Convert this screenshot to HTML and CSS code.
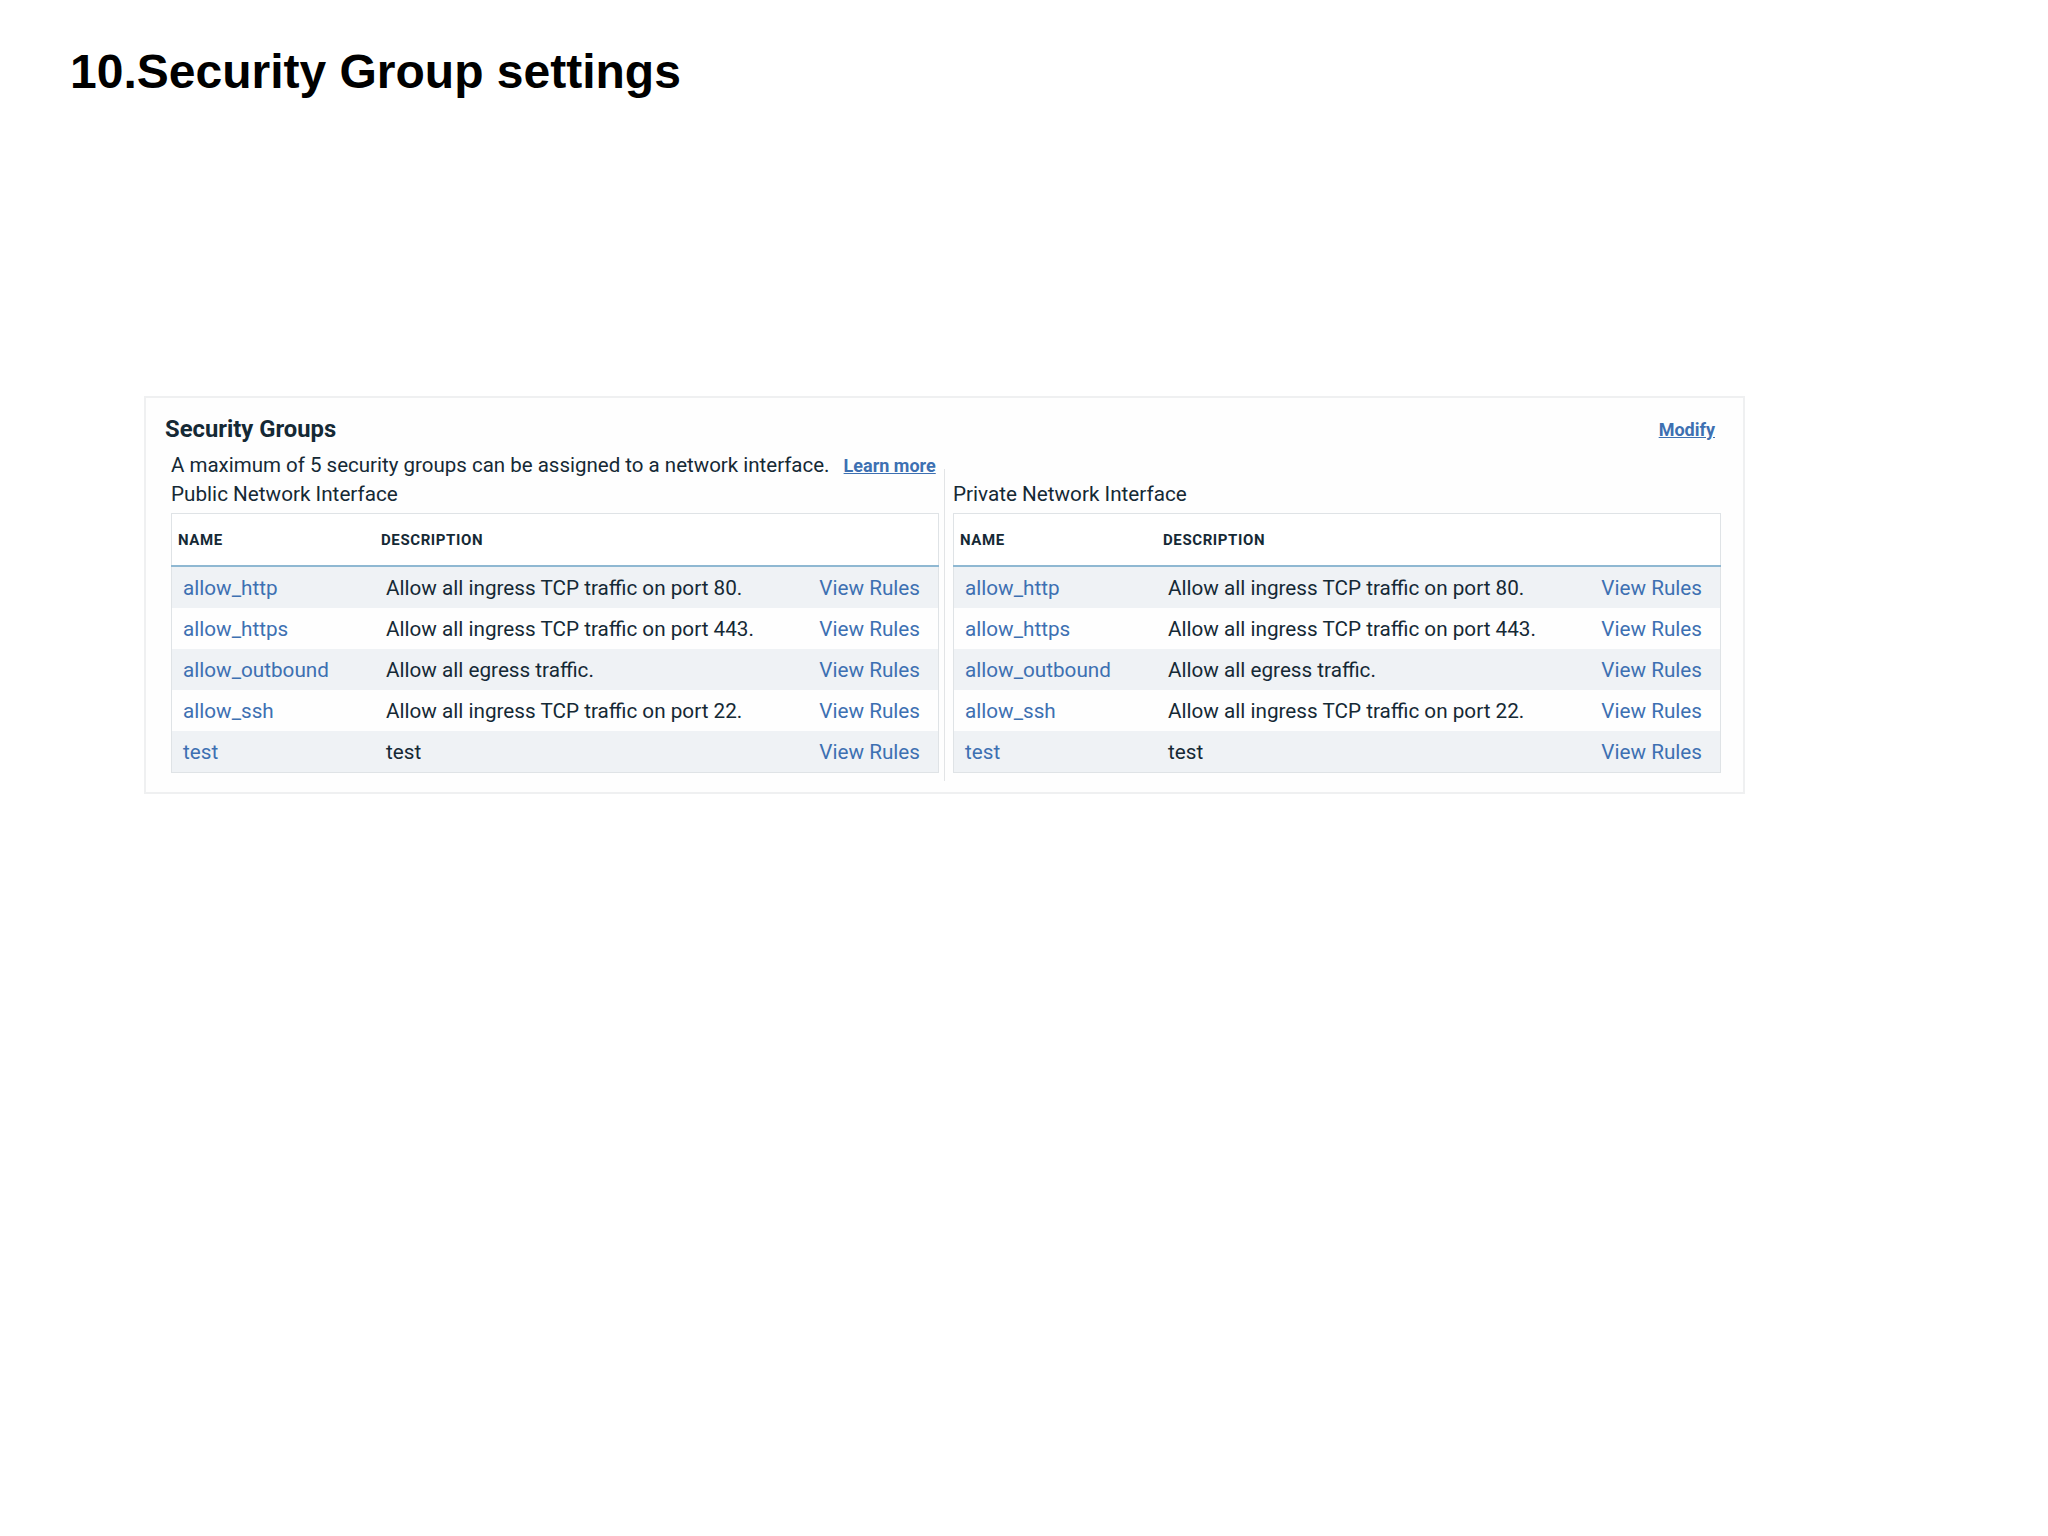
FILE: index.html
```html
<!DOCTYPE html>
<html lang="en">
<head>
  <meta charset="UTF-8">
  <title>Security Group settings</title>
  <link rel="stylesheet" href="styles.css">
</head>
<body>

  <h1 class="slide-title">10.Security Group settings</h1>

  <div class="sg-panel">
    <div class="sg-header">
      <h2>Security Groups</h2>
      <a href="#" class="sg-link">Modify</a>
    </div>
    <div class="sg-note">
      A maximum of 5 security groups can be assigned to a network interface.
      <a href="#" class="sg-link">Learn more</a>
    </div>

    <div class="sg-columns">
      <div class="sg-col">
        <div class="sg-label">Public Network Interface</div>
        <table class="sg-table">
          <thead>
            <tr><th class="col-name">NAME</th><th>DESCRIPTION</th><th></th></tr>
          </thead>
          <tbody>
            <tr><td class="col-name"><a href="#">allow_http</a></td><td>Allow all ingress TCP traffic on port 80.</td><td class="col-rules"><a href="#">View Rules</a></td></tr>
            <tr><td class="col-name"><a href="#">allow_https</a></td><td>Allow all ingress TCP traffic on port 443.</td><td class="col-rules"><a href="#">View Rules</a></td></tr>
            <tr><td class="col-name"><a href="#">allow_outbound</a></td><td>Allow all egress traffic.</td><td class="col-rules"><a href="#">View Rules</a></td></tr>
            <tr><td class="col-name"><a href="#">allow_ssh</a></td><td>Allow all ingress TCP traffic on port 22.</td><td class="col-rules"><a href="#">View Rules</a></td></tr>
            <tr><td class="col-name"><a href="#">test</a></td><td>test</td><td class="col-rules"><a href="#">View Rules</a></td></tr>
          </tbody>
        </table>
      </div>

      <div class="sg-divider"></div>

      <div class="sg-col">
        <div class="sg-label">Private Network Interface</div>
        <table class="sg-table">
          <thead>
            <tr><th class="col-name">NAME</th><th>DESCRIPTION</th><th></th></tr>
          </thead>
          <tbody>
            <tr><td class="col-name"><a href="#">allow_http</a></td><td>Allow all ingress TCP traffic on port 80.</td><td class="col-rules"><a href="#">View Rules</a></td></tr>
            <tr><td class="col-name"><a href="#">allow_https</a></td><td>Allow all ingress TCP traffic on port 443.</td><td class="col-rules"><a href="#">View Rules</a></td></tr>
            <tr><td class="col-name"><a href="#">allow_outbound</a></td><td>Allow all egress traffic.</td><td class="col-rules"><a href="#">View Rules</a></td></tr>
            <tr><td class="col-name"><a href="#">allow_ssh</a></td><td>Allow all ingress TCP traffic on port 22.</td><td class="col-rules"><a href="#">View Rules</a></td></tr>
            <tr><td class="col-name"><a href="#">test</a></td><td>test</td><td class="col-rules"><a href="#">View Rules</a></td></tr>
          </tbody>
        </table>
      </div>
    </div>
  </div>

</body>
</html>
```

FILE: styles.css
```css
body {
  margin: 0;
  background-color: #ffffff;
  font-family: Roboto, "Liberation Sans", sans-serif;
  color: #152935;
}

.slide-title {
  font-family: "Liberation Sans", Arial, sans-serif;
  font-size: 48px;
  font-weight: bold;
  color: #000000;
  margin: 0;
  padding: 44px 0 0 70px;
  line-height: 55px;
}

.sg-panel {
  margin: 297px 0 0 144px;
  width: 1601px;
  height: 398px;
  box-sizing: border-box;
  border: 2px solid #eff0f1;
  background-color: #fefefe;
  padding: 16px 22px 0 19px;
}

.sg-header {
  display: flex;
  justify-content: space-between;
  align-items: center;
  padding-right: 6px;
}

.sg-header h2 {
  margin: 0;
  font-size: 23.8px;
  font-weight: bold;
  color: #152935;
  line-height: 30px;
}

.sg-link {
  color: #3d70b2;
  font-weight: bold;
  font-size: 18px;
  text-decoration: underline;
}

.sg-note {
  margin: 8px 0 0 6px;
  font-size: 20.5px;
  line-height: 26px;
}

.sg-note .sg-link {
  margin-left: 9px;
}

.sg-columns {
  display: flex;
  margin-left: 6px;
}

.sg-col {
  width: 768px;
}

.sg-divider {
  width: 1px;
  background-color: #e2e4e6;
  margin: -10px 8px 0 5px;
  height: 312px;
}

.sg-label {
  font-size: 20.7px;
  line-height: 28px;
  margin: 1px 0 5px;
}

.sg-table {
  width: 100%;
  border-collapse: collapse;
  border: 1px solid #dfe3e6;
  font-size: 20.7px;
}

.sg-table th {
  text-align: left;
  font-size: 15px;
  letter-spacing: 0.6px;
  font-weight: bold;
  height: 51px;
  padding: 0 0 0 6px;
  border-bottom: 2px solid #8fb8d2;
  background-color: #ffffff;
}

.sg-table th.col-name {
  width: 197px;
}

.sg-table td {
  height: 41px;
  padding: 0 0 0 11px;
}

.sg-table td.col-rules {
  text-align: right;
  padding-right: 18px;
}

.sg-table tbody tr:nth-child(odd) {
  background-color: #eff2f5;
}

.sg-table a {
  color: #3d70b2;
  text-decoration: none;
}
```
